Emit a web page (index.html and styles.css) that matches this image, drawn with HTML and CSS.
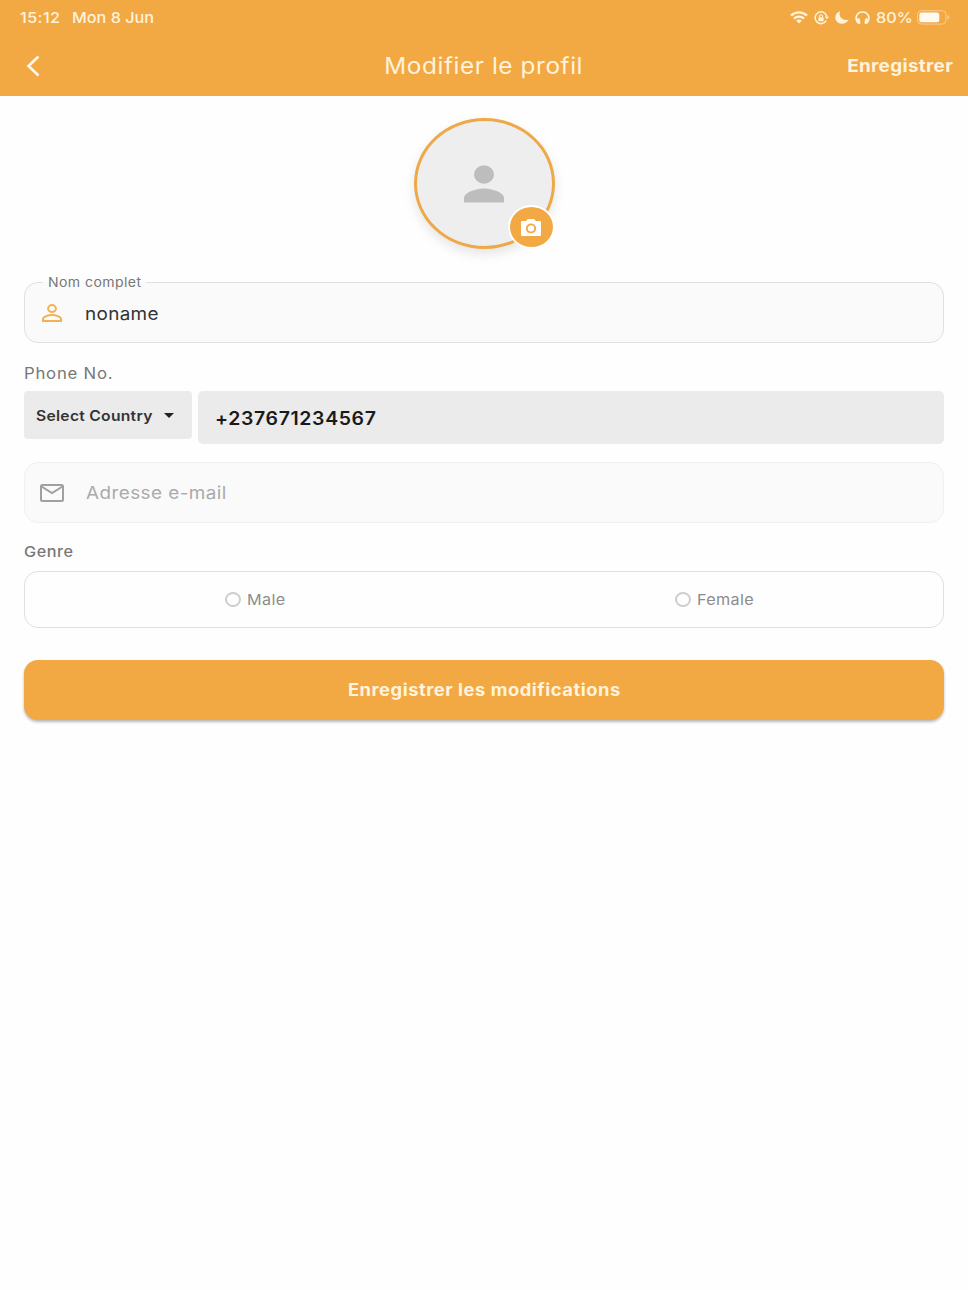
FILE: index.html
```html
<!DOCTYPE html>
<html lang="fr">
<head>
  <meta charset="UTF-8" />
  <meta name="viewport" content="width=device-width, initial-scale=1.0"/>
  <title>Modifier le profil</title>
  <link rel="stylesheet" href="styles.css">
</head>
<body>

  <header>
    <div class="status-bar">
      <div class="status-left">
        <span class="wide time">15:12</span>
        <span class="wide date">Mon 8 Jun</span>
      </div>
      <div class="status-right">
        <svg class="wifi" width="18" height="13" viewBox="0 0 18 13" fill="none" stroke="#fff3dc" stroke-width="2.4">
          <path d="M1 4.6a11.6 11.6 0 0 1 16 0"/>
          <path d="M3.9 7.6a7.5 7.5 0 0 1 10.2 0"/>
          <path d="M9 12.4L6.2 9.8a4.2 4.2 0 0 1 5.6 0z" fill="#fff3dc" stroke="none"/>
        </svg>
        <svg class="lock" width="15" height="14" viewBox="0 0 15 14" fill="none" stroke="#fff3dc" stroke-width="1.5">
          <path d="M12.2 9.6A5.9 5.9 0 1 1 12.8 5.4"/>
          <path d="M10.7 5.5h4.2l-2 2.8z" fill="#fff3dc" stroke="none"/>
          <rect x="4.4" y="6.3" width="5.2" height="3.9" rx=".6" fill="#fff3dc" stroke="none"/>
          <path d="M5.5 6.5V5.2a1.5 1.5 0 0 1 3 0v1.3" stroke-width="1.1"/>
        </svg>
        <svg class="moon" width="14" height="13" viewBox="0 0 14 13" fill="#fff3dc">
          <path d="M5 .3C1.900 1.300.3 3.800.3 6.500c0 3.500 3 6.200 6.700 6.200 2.900 0 5.500-1.600 6.600-4.200C8.500 10.500 3 6.500 5 .3z"/>
        </svg>
        <svg class="headphones" width="15" height="14" viewBox="0 0 15 14" fill="none" stroke="#fff3dc" stroke-width="1.7">
          <path d="M3 12C-.9 6.500 2 1 7.500 1s8.400 5.500 4.500 11"/>
          <rect x="2.200" y="7.400" width="3" height="5.600" rx="1.200" fill="#fff3dc" stroke="none" transform="rotate(-12 3.500 10.300)"/>
          <rect x="9.800" y="7.400" width="3" height="5.600" rx="1.200" fill="#fff3dc" stroke="none" transform="rotate(12 11.500 10.300)"/>
        </svg>
        <span class="wide percent">80%</span>
        <svg class="battery" width="33" height="15" viewBox="0 0 33 15">
          <rect x=".5" y=".7" width="28.500" height="13.400" rx="4" fill="none" stroke="#f8cd90"/>
          <rect x="2.300" y="2.500" width="20" height="9.800" rx="2.500" fill="#fffaf0"/>
          <path d="M30.500 5v4.800c2.400-1 2.400-3.800 0-4.800z" fill="#f8cd90"/>
        </svg>
      </div>
    </div>
    <div class="app-bar">
      <button class="back">
        <svg width="14" height="22" viewBox="0 0 14 22" fill="none" stroke="#fff8ea" stroke-width="2.600">
          <path d="M12.500 1.500L2.500 11l10 9.500"/>
        </svg>
      </button>
      <h1 class="wide">Modifier le profil</h1>
      <button class="wide save-link">Enregistrer</button>
    </div>
  </header>

  <main>
    <div class="avatar">
      <svg width="40" height="38" viewBox="0 0 40 38" fill="#bdbdbd">
        <ellipse cx="20" cy="9.500" rx="10" ry="9.200"/>
        <path d="M0 37.500v-4.500c0-6.200 13.300-9.600 20-9.600s20 3.400 20 9.600v4.500z"/>
      </svg>
      <span class="camera">
        <svg width="20" height="17" viewBox="0 0 20 17">
          <path d="M6.900 0L5.100 2H1.500C.6 2 0 2.500 0 3.300v12.400C0 16.500.6 17 1.500 17h17c.9 0 1.500-.5 1.500-1.300V3.300C20 2.500 19.400 2 18.500 2h-3.600l-1.800-2z" fill="#fff"/>
          <ellipse cx="10" cy="9.400" rx="4.200" ry="4" fill="#fff" stroke="#f2a944" stroke-width="1.900"/>
        </svg>
      </span>
    </div>

    <fieldset class="field name-field">
      <legend><span class="wide">Nom complet</span></legend>
      <svg width="20" height="18" viewBox="0 0 20 18" fill="none" stroke="#f2b157" stroke-width="2">
        <ellipse cx="10" cy="4.600" rx="3.900" ry="3.500"/>
        <path d="M1 17v-2c0-2.400 5.500-3.900 9-3.900s9 1.500 9 3.900v2z"/>
      </svg>
      <span class="wide value">noname</span>
    </fieldset>

    <div class="wide label phone-label">Phone No.</div>
    <div class="phone-row">
      <button class="country">
        <span class="wide">Select Country</span>
        <svg width="10" height="5" viewBox="0 0 10 5" fill="#222"><path d="M0 0h10L5 5z"/></svg>
      </button>
      <div class="phone"><span class="wide">+237671234567</span></div>
    </div>

    <div class="field email-field">
      <svg width="24" height="18" viewBox="0 0 24 18" fill="none" stroke="#a0a0a0" stroke-width="2">
        <rect x="1" y="1" width="22" height="16" rx="1.500"/>
        <path d="M1.500 2.500L12 9l10.500-6.500"/>
      </svg>
      <span class="wide placeholder">Adresse e-mail</span>
    </div>

    <div class="wide label genre-label">Genre</div>
    <div class="genre">
      <label class="option"><span class="radio"></span><span class="wide">Male</span></label>
      <label class="option"><span class="radio"></span><span class="wide">Female</span></label>
    </div>

    <button class="btn"><span class="wide">Enregistrer les modifications</span></button>
  </main>

</body>
</html>
```
FILE: styles.css
```css
* {
  box-sizing: border-box;
}

body {
  margin: 0;
  min-height: 100vh;
  font-family: Inter, 'Liberation Sans', sans-serif;
  background: #fefefe;
  color: #333;
}

button {
  border: none;
  background: none;
  padding: 0;
  font-family: inherit;
  cursor: pointer;
}

svg {
  display: block;
  flex-shrink: 0;
}

/* slightly extended lettering */
.wide {
  display: inline-block;
  transform: scaleX(1.08);
  transform-origin: left center;
}

header {
  height: 96px;
  background: #f2a944;
  color: #fff3dc;
}

.status-bar {
  height: 35px;
  padding: 0 18px 0 20px;
  display: flex;
  justify-content: space-between;
  align-items: center;
  font-size: 15px;
  font-weight: 500;
}

.status-left,
.status-right {
  display: flex;
  align-items: center;
}

.status-left {
  gap: 14px;
}

.status-right {
  gap: 6px;
}

.time {
  letter-spacing: 0.4px;
}

.date {
  letter-spacing: 0;
}

.percent {
  margin-right: 1px;
  letter-spacing: 0.1px;
}

.app-bar {
  height: 61px;
  padding: 0 15px 0 26px;
  display: grid;
  grid-template-columns: 1fr auto 1fr;
  align-items: center;
}

h1 {
  margin: 0;
  padding-right: 10px;
  font-size: 22.5px;
  font-weight: 400;
  letter-spacing: 0.55px;
  white-space: nowrap;
}

h1.wide {
  transform-origin: center;
}

.back {
  justify-self: start;
}

.save-link {
  justify-self: end;
  color: #fff3dc;
  font-size: 17.5px;
  font-weight: 700;
  letter-spacing: 0.3px;
}

.save-link.wide {
  transform-origin: right center;
}

main {
  padding: 22px 24px 0;
}

.avatar {
  position: relative;
  width: 141px;
  height: 131px;
  margin: 0 auto;
  display: flex;
  align-items: center;
  justify-content: center;
  background: #eee;
  border: 3px solid #efa848;
  border-radius: 50%;
  box-shadow: 0 5px 12px rgba(0,0,0,0.1);
}

.camera {
  position: absolute;
  right: -3px;
  bottom: -3px;
  width: 47px;
  height: 44px;
  display: flex;
  align-items: center;
  justify-content: center;
  background: #f2a944;
  border: 2px solid white;
  border-radius: 50%;
}

.field {
  display: flex;
  align-items: center;
  height: 61px;
  background: #fafafa;
  border: 1px solid #e0e0e0;
  border-radius: 14px;
}

.name-field {
  height: 69px;
  margin: 25px 0 0;
  padding: 0 17px 7px;
}

legend {
  width: 103px;
  padding: 1px 5px 0;
  margin-left: 1px;
  font-size: 13px;
  line-height: 15px;
  letter-spacing: 0.4px;
  color: #777;
  white-space: nowrap;
}

.value {
  margin-left: 23px;
  padding-top: 1px;
  font-size: 17.5px;
  letter-spacing: 0.3px;
  color: #333;
}

.label {
  display: block;
  width: fit-content;
  font-size: 15.5px;
  line-height: 20px;
  letter-spacing: 0.7px;
  color: #777;
}

.phone-label {
  margin-top: 21px;
}

.phone-row {
  display: flex;
  align-items: flex-start;
  gap: 6px;
  margin-top: 7px;
}

.country {
  width: 168px;
  height: 48px;
  padding: 0 18px 0 12px;
  display: flex;
  align-items: center;
  justify-content: space-between;
  background: #ebebeb;
  border-radius: 4px;
  font-size: 14.5px;
  font-weight: 600;
  letter-spacing: 0.25px;
  color: #333;
}

.phone {
  flex: 1;
  height: 53px;
  padding-left: 17px;
  line-height: 55px;
  background: #ebebeb;
  border-radius: 5px;
  font-size: 18px;
  font-weight: 600;
  letter-spacing: 0.6px;
  color: #1a1a1a;
}

.email-field {
  margin-top: 18px;
  padding: 0 15px;
  border-color: #f0f0f0;
}

.placeholder {
  margin-left: 22px;
  font-size: 17.5px;
  letter-spacing: 0.4px;
  color: #aaa;
}

.genre-label {
  margin-top: 19px;
  font-size: 15px;
  font-weight: 500;
  letter-spacing: 0.5px;
}

.genre {
  height: 57px;
  margin-top: 9px;
  display: grid;
  grid-template-columns: 457px 1fr;
  border: 1px solid #e0e0e0;
  border-radius: 14px;
}

.option {
  display: flex;
  align-items: center;
  justify-content: center;
  gap: 6px;
  font-size: 15px;
  letter-spacing: 0.3px;
  color: #8c8c8c;
}

.radio {
  width: 16px;
  height: 15px;
  border: 2px solid #cdcdcd;
  border-radius: 50%;
}

.btn {
  display: block;
  width: 100%;
  height: 60px;
  margin-top: 32px;
  background: #f2a944;
  color: #fff3dc;
  border-radius: 14px;
  box-shadow: 0 2px 3px rgba(0,0,0,0.28);
  font-size: 17px;
  font-weight: 700;
  letter-spacing: 0.48px;
}

.btn .wide {
  transform-origin: center;
}
```
